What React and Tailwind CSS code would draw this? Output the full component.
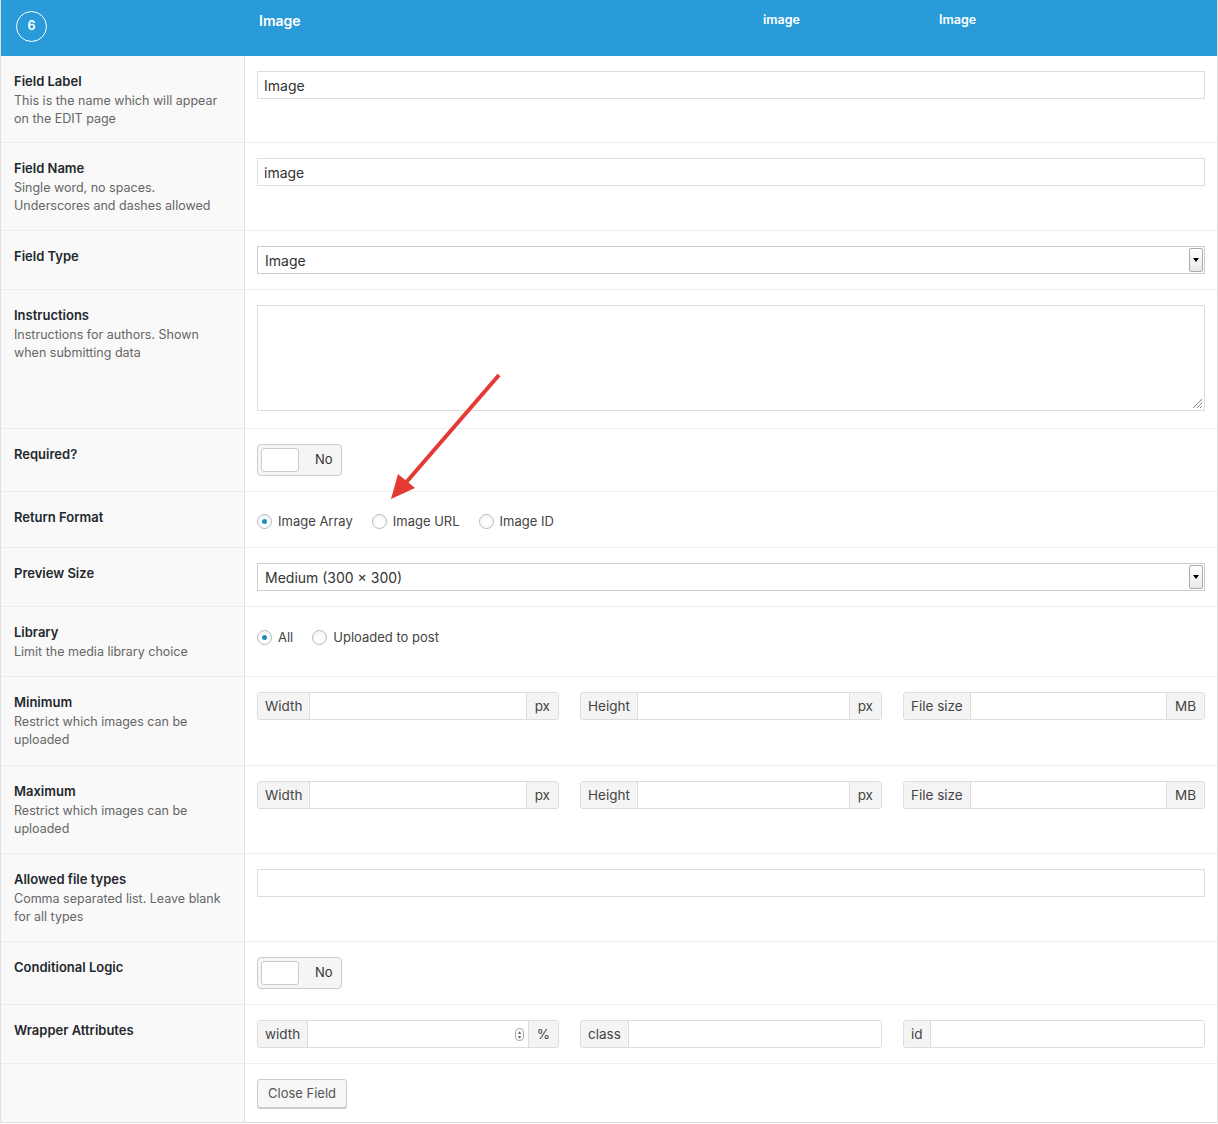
import React from "react";

const Row = ({ h, label, desc, children, pt = "pt-[15px]" }) => (
  <div className={`flex border-b border-[#eeeeee] ${h}`}>
    <div className="w-[244px] shrink-0 bg-[#f9f9f9] border-r border-[#e1e1e1] px-[13px] pt-[16px]">
      {label && <div className="text-[13px] font-semibold text-[#23282d] leading-[18px]">{label}</div>}
      {desc && <div className="text-[12.5px] text-[#666] leading-[18px] mt-[2px]">{desc}</div>}
    </div>
    <div className={`flex-1 px-[12px] ${pt}`}>{children}</div>
  </div>
);

const Input = ({ v = "" }) => (
  <div className="h-[28px] border border-[#dddddd] bg-white px-[6px] flex items-center text-[14px] text-[#333]">{v}</div>
);

const Select = ({ v }) => (
  <div className="h-[28px] border border-[#cccccc] bg-white pl-[7px] flex items-center text-[14px] text-[#333] justify-between">
    <span>{v}</span>
    <div className="w-[14px] h-[24px] border border-[#aaa] rounded-[2px] bg-gradient-to-b from-white to-[#e8e8e8] flex items-center justify-center mr-[1px]">
      <div className="w-0 h-0 border-l-[3px] border-r-[3px] border-t-[4px] border-l-transparent border-r-transparent border-t-black" />
    </div>
  </div>
);

const Radio = ({ on, label }) => (
  <div className="flex items-center gap-[6px] text-[13px] text-[#444]">
    <div className="w-[15px] h-[15px] rounded-full border border-[#b4b9be] bg-white flex items-center justify-center shadow-inner">
      {on && <div className="w-[5px] h-[5px] rounded-full bg-[#1e8cbe]" />}
    </div>
    {label}
  </div>
);

const Toggle = () => (
  <div className="w-[85px] h-[32px] border border-[#ccc] rounded-[4px] bg-[#f5f5f5] flex items-center px-[3px]">
    <div className="w-[38px] h-[24px] border border-[#ccc] rounded-[3px] bg-white" />
    <span className="ml-[16px] text-[13px] text-[#333]">No</span>
  </div>
);

const Group = ({ pre, post, spin }) => (
  <div className="flex h-[28px] border border-[#dddddd] rounded-[3px] text-[13.5px] text-[#444] overflow-hidden">
    <div className="bg-[#f4f4f4] border-r border-[#dddddd] px-[7px] flex items-center">{pre}</div>
    <div className="flex-1 bg-white flex items-center justify-end pr-[4px]">
      {spin && (
        <div className="w-[9px] h-[13px] border border-[#aaa] rounded-[4px] flex flex-col items-center justify-center text-[6px] leading-[5px] text-[#666]">
          <span>▴</span><span>▾</span>
        </div>
      )}
    </div>
    {post && <div className="bg-[#f4f4f4] border-l border-[#dddddd] px-[8px] flex items-center">{post}</div>}
  </div>
);

export default function App() {
  return (
    <div className="relative w-[1218px] bg-white border-l border-r border-b border-[#dfdfdf]" style={{ fontFamily: "Inter, 'Open Sans', sans-serif" }}>
      <div className="h-[56px] bg-[#2a9bd9] flex text-white">
        <div className="w-[258px] pl-[15px] pt-[11px]">
          <div className="w-[31px] h-[31px] rounded-full border border-white flex items-center justify-center text-[12.5px] font-semibold">6</div>
        </div>
        <div className="w-[340px] pt-[10px] text-[14px] font-semibold">Image</div>
        <div className="w-[340px] pt-[11px] text-[12.5px] font-semibold text-center pl-[25px]">image</div>
        <div className="pt-[11px] text-[12.5px] font-semibold pl-[-10px]">Image</div>
      </div>

      <Row h="h-[87px]" label="Field Label" desc="This is the name which will appear on the EDIT page"><Input v="Image" /></Row>
      <Row h="h-[88px]" label="Field Name" desc="Single word, no spaces. Underscores and dashes allowed"><Input v="image" /></Row>
      <Row h="h-[59px]" label="Field Type"><Select v="Image" /></Row>
      <Row h="h-[139px]" label="Instructions" desc="Instructions for authors. Shown when submitting data">
        <div className="relative h-[106px] border border-[#dddddd] bg-white">
          <svg className="absolute right-[1px] bottom-[1px]" width="12" height="12" viewBox="0 0 12 12" stroke="#888" strokeWidth="1">
            <line x1="11" y1="2" x2="2" y2="11" /><line x1="11" y1="6" x2="6" y2="11" /><line x1="11" y1="9" x2="9" y2="11" />
          </svg>
        </div>
      </Row>
      <Row h="h-[63px]" label="Required?"><Toggle /></Row>
      <Row h="h-[56px]" label="Return Format" pt="pt-[20px]">
        <div className="flex gap-[19px]"><Radio on label="Image Array" /><Radio label="Image URL" /><Radio label="Image ID" /></div>
      </Row>
      <Row h="h-[59px]" label="Preview Size"><Select v="Medium (300 x 300)" /></Row>
      <Row h="h-[70px]" label="Library" desc="Limit the media library choice" pt="pt-[21px]">
        <div className="flex gap-[19px]"><Radio on label="All" /><Radio label="Uploaded to post" /></div>
      </Row>
      <Row h="h-[89px]" label="Minimum" desc="Restrict which images can be uploaded">
        <div className="grid grid-cols-3 gap-[21px]"><Group pre="Width" post="px" /><Group pre="Height" post="px" /><Group pre="File size" post="MB" /></div>
      </Row>
      <Row h="h-[88px]" label="Maximum" desc="Restrict which images can be uploaded">
        <div className="grid grid-cols-3 gap-[21px]"><Group pre="Width" post="px" /><Group pre="Height" post="px" /><Group pre="File size" post="MB" /></div>
      </Row>
      <Row h="h-[88px]" label="Allowed file types" desc="Comma separated list. Leave blank for all types"><Input /></Row>
      <Row h="h-[63px]" label="Conditional Logic"><Toggle /></Row>
      <Row h="h-[59px]" label="Wrapper Attributes">
        <div className="grid grid-cols-3 gap-[21px]"><Group pre="width" post="%" spin /><Group pre="class" /><Group pre="id" /></div>
      </Row>
      <div className="flex h-[58px]">
        <div className="w-[244px] shrink-0 bg-[#f9f9f9] border-r border-[#e1e1e1]" />
        <div className="px-[12px] pt-[15px]">
          <div className="h-[29px] px-[10px] border border-[#cccccc] rounded-[3px] bg-[#f7f7f7] shadow-[0_1px_0_#ccc] flex items-center text-[13px] text-[#555]">Close Field</div>
        </div>
      </div>

      <svg className="absolute left-0 top-0 pointer-events-none" width="1218" height="1124">
        <line x1="498" y1="375" x2="402" y2="486" stroke="#e53935" strokeWidth="4" />
        <polygon points="390,499 397,474 414,488" fill="#e53935" />
      </svg>
    </div>
  );
}
